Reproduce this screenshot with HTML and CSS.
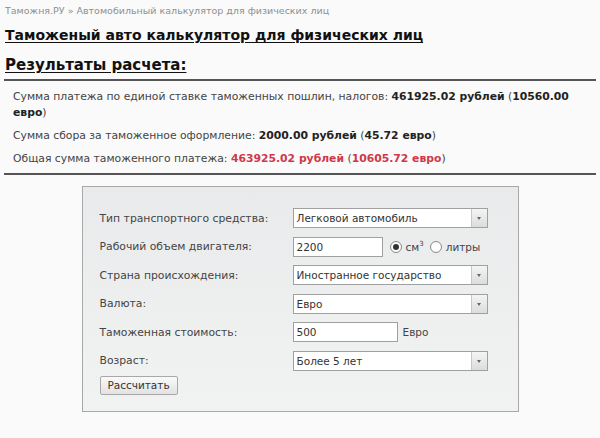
FILE: index.html
```html
<!DOCTYPE html>
<html lang="ru">
<head>
<meta charset="utf-8">
<title>Таможеный авто калькулятор</title>
<link rel="stylesheet" href="styles.css">
</head>
<body>
<div class="page">
  <div class="crumbs">Таможня.РУ » Автомобильный калькулятор для физических лиц</div>
  <h1 class="title">Таможеный авто калькулятор для физических лиц</h1>
  <h2 class="subtitle">Результаты расчета:</h2>
  <div class="results">
    <p class="res res-first">Сумма платежа по единой ставке таможенных пошлин, налогов: <b>461925.02 рублей</b> (<b>10560.00</b> <b>евро</b>)</p>
    <p class="res">Сумма сбора за таможенное оформление: <b>2000.00 рублей</b> (<b>45.72 евро</b>)</p>
    <p class="res">Общая сумма таможенного платежа: <b class="red">463925.02 рублей</b> (<b class="red">10605.72 евро</b>)</p>
  </div>
  <div class="panel">
    <div class="form">
      <div class="label">Тип транспортного средства:</div>
      <div class="ctl"><div class="select"><span class="sv">Легковой автомобиль</span><span class="arrow"></span></div></div>

      <div class="label">Рабочий объем двигателя:</div>
      <div class="ctl">
        <div class="input w-vol">2200</div>
        <span class="radio on"></span><span class="unit">см<sup>3</sup></span>
        <span class="radio"></span><span class="unit">литры</span>
      </div>

      <div class="label">Страна происхождения:</div>
      <div class="ctl"><div class="select"><span class="sv">Иностранное государство</span><span class="arrow"></span></div></div>

      <div class="label">Валюта:</div>
      <div class="ctl"><div class="select"><span class="sv">Евро</span><span class="arrow"></span></div></div>

      <div class="label">Таможенная стоимость:</div>
      <div class="ctl"><div class="input w-cost">500</div><span class="unit cur">Евро</span></div>

      <div class="label">Возраст:</div>
      <div class="ctl"><div class="select"><span class="sv">Более 5 лет</span><span class="arrow"></span></div></div>
    </div>
    <div class="btn">Рассчитать</div>
  </div>
</div>
</body>
</html>
```
FILE: styles.css
```css
html, body {
  margin: 0;
  padding: 0;
  background: #fafafa;
}
body {
  font-family: "DejaVu Sans", Verdana, sans-serif;
  color: #333;
}
.page {
  padding: 4px 4px 0 4px;
}
.crumbs {
  font-size: 9.5px;
  color: #8f8f8f;
  padding-left: 1px;
  height: 13px;
  line-height: 13px;
}
.title {
  margin: 9px 0 0 1px;
  font-size: 14px;
  line-height: 18px;
  font-weight: bold;
  color: #111;
  text-decoration: underline;
  text-underline-offset: 2px;
}
.subtitle {
  margin: 12px 0 0 1px;
  font-size: 15px;
  line-height: 19px;
  font-weight: bold;
  color: #111;
  text-decoration: underline;
  text-underline-offset: 2px;
}
.results {
  margin-top: 4px;
  border-top: 2px solid #555;
  border-bottom: 2px solid #555;
  padding: 8px 20px 6px 9px;
}
.res {
  margin: 0;
  font-size: 10.8px;
  line-height: 16px;
  color: #444;
}
.res + .res {
  margin-top: 7px;
}
.res b {
  color: #222;
}
.res b.red {
  color: #d0384a;
}
.panel {
  width: 437px;
  margin: 11px auto 0;
  border: 1px solid #a8a8a8;
  background: linear-gradient(#e8eaeb, #eef0f0 60%, #f1f2f2);
  padding: 21px 0 16px 17px;
  box-sizing: border-box;
  height: 226px;
}
.form {
  display: grid;
  grid-template-columns: 193px 1fr;
  grid-auto-rows: 20px;
  row-gap: 8.5px;
  align-items: center;
}
.label {
  font-size: 10.8px;
  color: #444;
}
.ctl {
  display: flex;
  align-items: center;
  height: 20px;
}
.select {
  width: 195px;
  height: 20px;
  box-sizing: border-box;
  border: 1px solid #a0a0a0;
  background: #fff;
  display: flex;
  align-items: center;
  justify-content: space-between;
  font-size: 10.5px;
  color: #333;
}
.sv {
  padding-left: 3px;
}
.arrow {
  width: 15px;
  height: 18px;
  border-left: 1px solid #c8c8c8;
  background: linear-gradient(#f4f4f4, #dcdcdc);
  position: relative;
}
.arrow::after {
  content: "";
  position: absolute;
  left: 5px;
  top: 8px;
  border-left: 2.5px solid transparent;
  border-right: 2.5px solid transparent;
  border-top: 3px solid #666;
}
.input {
  height: 20px;
  box-sizing: border-box;
  border: 1px solid #a0a0a0;
  background: #fff;
  font-size: 10.5px;
  line-height: 18px;
  padding-left: 3px;
  color: #333;
}
.w-vol { width: 90px; }
.w-cost { width: 105px; }
.radio {
  width: 10px;
  height: 10px;
  border: 1px solid #888;
  border-radius: 50%;
  background: #fdfdfd;
  margin-left: 7px;
  position: relative;
}
.radio + .unit { margin-left: 4px; }
.unit + .radio { margin-left: 6px; }
.radio.on::after {
  content: "";
  position: absolute;
  left: 2px;
  top: 2px;
  width: 6px;
  height: 6px;
  border-radius: 50%;
  background: #333;
}
.unit {
  font-size: 10.5px;
  color: #444;
}
.unit sup {
  font-size: 7px;
  vertical-align: 5px;
  line-height: 0;
}
.unit.cur {
  margin-left: 5px;
}
.btn {
  margin-top: 5px;
  width: 78px;
  height: 19px;
  box-sizing: border-box;
  border: 1px solid #a8a8a8;
  border-radius: 2px;
  background: linear-gradient(#fafafa, #e2e2e2);
  font-size: 10.5px;
  line-height: 17px;
  text-align: center;
  color: #333;
}
```
